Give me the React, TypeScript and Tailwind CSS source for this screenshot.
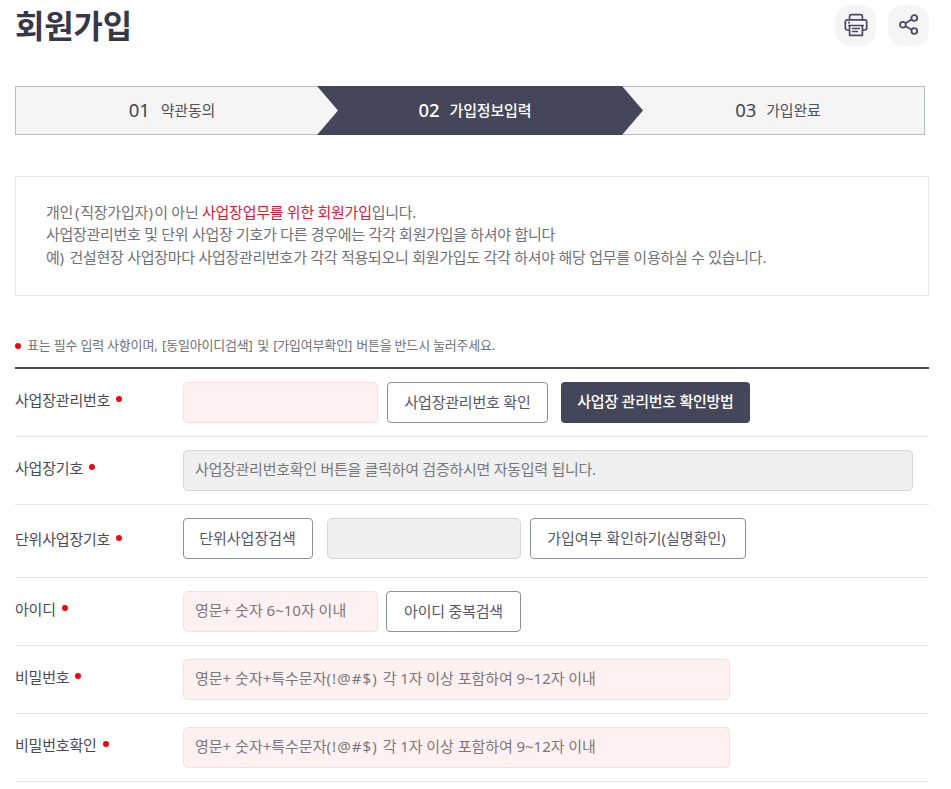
import type { ReactNode } from "react";

function Dot({ className = "" }: { className?: string }) {
  return <span className={`block size-[6px] shrink-0 rounded-full bg-[#f5000f] ${className}`} />;
}

function Row({ label, labelTop, height, children }: { label: string; labelTop: string; height: string; children: ReactNode }) {
  return (
    <div className={`flex border-b border-[#e4e5e7] pt-[13px] ${height}`}>
      <div className={`flex w-[168px] shrink-0 items-start ${labelTop}`}>
        <span className="text-[15px] leading-[22px] tracking-[-0.2px] text-[#4a4b52]">{label}</span>
        <Dot className="ml-[6px] mt-[7px]" />
      </div>
      <div className="flex items-start">{children}</div>
    </div>
  );
}

function Field({ children, tone = "pink", className }: { children?: ReactNode; tone?: "pink" | "gray"; className: string }) {
  const color = tone === "pink" ? "border-[#fddcdb] bg-[#fff1f1]" : "border-[#d5d6d8] bg-[#f0f0f0]";
  return (
    <div className={`flex h-[41px] items-center rounded-[5px] border pl-[11px] text-[15px] leading-[22px] text-[#77787c] ${color} ${className}`}>
      <span className="-mt-[4px]">{children}</span>
    </div>
  );
}

function Button({ text, className }: { text: string; className: string }) {
  return (
    <button className={`flex h-[41px] items-center justify-center rounded-[4px] border border-[#8b8f9c] bg-white pb-[2px] text-[15px] leading-[22px] text-[#55566a] ${className}`}>
      <span>{text}</span>
    </button>
  );
}

function PasswordHint() {
  return (
    <>
      영문+ 숫자+특수문자<span className="tracking-[1.1px]">(!@#$</span><span className="mr-[2px]">)</span>
      <span className="tracking-[-0.05px]"> 각 1자 이상 포함하여 9~12자 이내</span>
    </>
  );
}

export default function App() {
  return (
    <div className="h-[789px] w-[951px] overflow-hidden whitespace-nowrap bg-white pl-[15px] font-['Noto_Sans','Noto_Sans_CJK_KR',sans-serif]">
      <header className="flex h-[86px] w-[914px] items-start justify-between">
        <h1 className="mt-[3px] text-[32px] font-bold leading-[46px] tracking-[-0.2px] text-[#373748]">회원가입</h1>
        <div className="mt-[5px] flex gap-3">
          <button className="flex size-[41px] items-center justify-center rounded-[15px] bg-[#f5f5f5] pb-[2px]">
            <svg width="24" height="24" viewBox="0 0 24 24" fill="none" stroke="#4b4a62" strokeWidth="1.700" strokeLinejoin="round" strokeLinecap="round">
              <path d="M5.600 6.700V3.200a1.500 1.500 0 0 1 1.500-1.500h9.800a1.500 1.500 0 0 1 1.500 1.500v3.500" />
              <path d="M5.200 17H3.200a1.900 1.900 0 0 1-1.900-1.900V8.700a1.900 1.900 0 0 1 1.900-1.900h17.600a1.900 1.900 0 0 1 1.900 1.900v6.400a1.900 1.900 0 0 1-1.900 1.900h-2" />
              <path d="M4.800 12.500h14.400M5.600 12.500v9.800h12.800v-9.800M8.700 15.500h6.600M8.700 18.500h4.600M4.600 9.700h.6" />
            </svg>
          </button>
          <button className="flex size-[41px] items-center justify-center rounded-[15px] bg-[#f5f5f5] pb-[2px]">
            <svg width="20" height="22" viewBox="0 0 20 22" fill="none" stroke="#4b4a62" strokeWidth="1.800">
              <circle cx="3.900" cy="10.700" r="2.900" />
              <circle cx="15.300" cy="4" r="2.900" />
              <circle cx="15.300" cy="17" r="2.900" />
              <path d="M6.500 9.300 12.700 5.600M6.500 12.200l6.200 3.500" />
            </svg>
          </button>
        </div>
      </header>

      <div className="relative flex h-[49px] w-[910px] border border-[#b9bec6] bg-[#f5f5f5] text-[15px] tracking-[-0.15px] text-[#4f5058]">
        <svg className="absolute -top-px left-[301px]" width="326" height="49" viewBox="0 0 326 49">
          <path d="M0 0H305L326 24.500 305 49H0L21 24.500Z" fill="#444659" />
        </svg>
        <div className="relative flex w-[312px] items-center justify-center gap-[11px]">
          <span className="pb-[2px] text-[18.500px] text-[#414250]">01</span>
          <span>약관동의</span>
        </div>
        <div className="relative flex w-[294px] items-center justify-center gap-[10px] text-white">
          <span className="pb-[2px] text-[18.500px] font-medium">02</span>
          <span className="pb-px font-medium">가입정보입력</span>
        </div>
        <div className="relative flex flex-1 items-center justify-center gap-[10px] pl-[10px]">
          <span className="pb-[2px] text-[18.500px] text-[#414250]">03</span>
          <span>가입완료</span>
        </div>
      </div>

      <section className="mt-[41px] h-[120px] w-[914px] border border-[#e6e7e9] pl-[30px] pt-[24px] text-[15px] leading-[22.500px] tracking-[-0.27px] text-[#707176]">
        <p>
          개인<span className="ml-[2px] mr-[1px]">(</span>직장가입자<span className="ml-[0.5px] mr-[1.5px]">)</span>이 아닌{" "}
          <span className="text-[#e0183c]">사업장업무를 위한 회원가입</span>입니다.
        </p>
        <p className="-mt-px mb-px tracking-[-0.29px]">사업장관리번호 및 단위 사업장 기호가 다른 경우에는 각각 회원가입을 하셔야 합니다</p>
        <p>
          예<span className="mr-[2px]">)</span> 건설현장 사업장마다 사업장관리번호가 각각 적용되오니 회원가입도 각각 하셔야 해당 업무를 이용하실 수 있습니다.
        </p>
      </section>

      <div className="mt-[38px] flex h-[33px] items-start">
        <Dot className="mt-[9px]" />
        <p className="ml-[6px] text-[13px] leading-[22px] tracking-[-0.2px] text-[#707176]">
          표는 필수 입력 사항이며,<span className="ml-[1.5px]"> [</span>동일아이디검색<span className="mr-[1.5px]">]</span> 및<span className="ml-[1px]"> [</span>가입여부확인<span className="mr-[1px]">]</span> 버튼을 반드시 눌러주세요.
        </p>
      </div>

      <form className="w-[914px] border-t-2 border-[#4a4a5e]">
        <Row label="사업장관리번호" labelTop="pt-[7px]" height="h-[68px]">
          <Field className="w-[195px]" />
          <Button text="사업장관리번호 확인" className="ml-[9px] w-[161px] tracking-[-0.2px]" />
          <button className="ml-[13px] flex h-[41px] w-[189px] items-center justify-center rounded-[4px] bg-[#444659] pb-[3px] text-[15px] font-medium leading-[22px] tracking-[-0.25px] text-white">
            <span>사업장 관리번호 확인방법</span>
          </button>
        </Row>
        <Row label="사업장기호" labelTop="pt-[7px]" height="h-[68px]">
          <Field tone="gray" className="w-[730px] tracking-[-0.27px]">사업장관리번호확인 버튼을 클릭하여 검증하시면 자동입력 됩니다.</Field>
        </Row>
        <Row label="단위사업장기호" labelTop="pt-[10px]" height="h-[73px]">
          <Button text="단위사업장검색" className="w-[130px] pr-px" />
          <Field tone="gray" className="ml-[14px] w-[194px]" />
          <Button text="가입여부 확인하기(실명확인)" className="ml-[9px] w-[216px] pr-[3px]" />
        </Row>
        <Row label="아이디" labelTop="pt-[7px]" height="h-[68px]">
          <Field className="w-[195px]">영문+ 숫자 6~10자 이내</Field>
          <Button text="아이디 중복검색" className="ml-[8px] w-[135px] tracking-[-0.2px]" />
        </Row>
        <Row label="비밀번호" labelTop="pt-[7px]" height="h-[68px]">
          <Field className="w-[547px]"><PasswordHint /></Field>
        </Row>
        <Row label="비밀번호확인" labelTop="pt-[7px]" height="h-[68px]">
          <Field className="w-[547px]"><PasswordHint /></Field>
        </Row>
      </form>
    </div>
  );
}
